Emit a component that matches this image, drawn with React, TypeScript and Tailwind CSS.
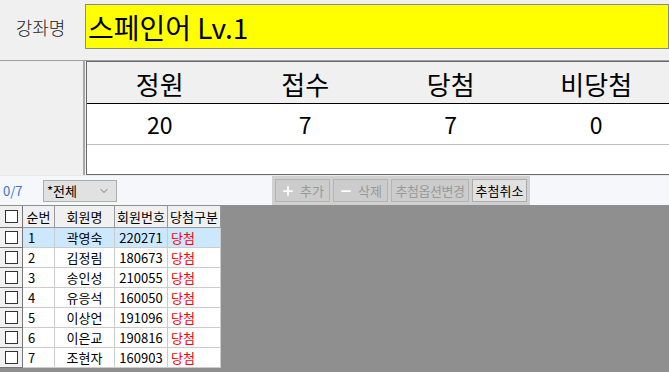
import { Plus, Minus, ChevronDown } from 'lucide-react';

const rows = [
    { no: 1, name: '곽영숙', id: '220271' },
    { no: 2, name: '김정림', id: '180673' },
    { no: 3, name: '송인성', id: '210055' },
    { no: 4, name: '유응석', id: '160050' },
    { no: 5, name: '이상언', id: '191096' },
    { no: 6, name: '이은교', id: '190816' },
    { no: 7, name: '조현자', id: '160903' },
];

const stats = [
    { label: '정원', value: '20' },
    { label: '접수', value: '7' },
    { label: '당첨', value: '7' },
    { label: '비당첨', value: '0' },
];

function Check() {
    return <div className="w-[13px] h-[13px] bg-white border border-[#333]" />;
}

export default function App() {
    return (
        <div
            className="w-[669px] h-[372px] overflow-hidden bg-[#f0f0f0] flex flex-col text-black"
            style={{ fontFamily: '"Noto Sans CJK KR", "Noto Sans", sans-serif' }}
        >
            {/* 강좌명 */}
            <div className="h-[61px] flex border-b border-[#a0a0a0] shrink-0">
                <div className="w-[85px] flex items-center justify-center text-[18px] font-light text-[#222] pb-[6px] pr-[4px]">강좌명</div>
                <div className="flex-1 pt-[4px]">
                    <div className="h-[45px] bg-[#ffff00] border border-[#8a8a8a] flex items-center pl-[2px] text-[28px] leading-none">
                        스페인어 Lv.1
                    </div>
                </div>
            </div>

            {/* 통계 */}
            <div className="h-[114px] flex shrink-0">
                <div className="w-[85px] border-r-2 border-[#a8a8a8]" />
                <div className="flex-1 ml-[1px] border border-[#6a6a6a] border-r-0 bg-white flex flex-col">
                    <div className="h-[42px] bg-[#f0f0f0] border-b border-black grid grid-cols-4">
                        {stats.map((s) => (
                            <div key={s.label} className="flex items-center justify-center text-[26px] leading-none pt-[2px]">{s.label}</div>
                        ))}
                    </div>
                    <div className="h-[41px] border-b border-[#c0c0c0] grid grid-cols-4">
                        {stats.map((s) => (
                            <div key={s.label} className="flex items-center justify-center text-[23px] leading-none">{s.value}</div>
                        ))}
                    </div>
                    <div className="flex-1" />
                </div>
            </div>

            {/* 툴바 */}
            <div className="h-[30px] flex bg-[#f5f7fb] shrink-0 border-t border-[#e8e8e8]">
                <div className="w-[43px] flex items-center pl-[3px] text-[13px] text-[#3a78c8]">0/7</div>
                <div className="mt-[4px] w-[74px] h-[22px] bg-[#e1e1e1] border border-[#adadad] flex items-center justify-between pl-[3px] pr-[6px] text-[13px]">
                    <span>*전체</span>
                    <ChevronDown size={12} strokeWidth={1.5} className="text-[#555]" />
                </div>
                <div className="w-[155px]" />
                <div className="flex items-center gap-[3px] bg-[#d0d0d0] px-[3px] text-[13px]">
                    <div className="h-[23px] w-[55px] bg-[#cccccc] border border-[#b4b4b4] flex items-center justify-center gap-[5px] text-[#9a9a9a]">
                        <Plus size={14} strokeWidth={3} className="text-white" />
                        추가
                    </div>
                    <div className="h-[23px] w-[55px] bg-[#cccccc] border border-[#b4b4b4] flex items-center justify-center gap-[5px] text-[#9a9a9a]">
                        <Minus size={14} strokeWidth={3} className="text-white" />
                        삭제
                    </div>
                    <div className="h-[23px] w-[78px] bg-[#cccccc] border border-[#b4b4b4] flex items-center justify-center text-[#9a9a9a] tracking-[-0.5px]">
                        추첨옵션변경
                    </div>
                    <div className="h-[23px] w-[55px] bg-[#e1e1e1] border border-[#adadad] flex items-center justify-center">
                        추첨취소
                    </div>
                </div>
                <div className="flex-1" />
            </div>

            {/* 목록 */}
            <div className="flex-1 bg-[#8f8f8f] flex">
                <div className="w-[221px] text-[13px] leading-none">
                    <div className="flex h-[23px] bg-[#f0f0f0] border-t border-[#8f8f8f]">
                        <div className="w-[23px] flex items-center justify-center border-r border-b border-[#777]"><Check /></div>
                        <div className="w-[32px] flex items-center justify-center border-r border-b border-[#999]">순번</div>
                        <div className="w-[60px] flex items-center justify-center border-r border-b border-[#999]">회원명</div>
                        <div className="w-[53px] flex items-center justify-center border-r border-b border-[#999]">회원번호</div>
                        <div className="w-[53px] flex items-center justify-center border-r border-b border-[#999]">당첨구분</div>
                    </div>
                    {rows.map((r, i) => (
                        <div key={r.no} className={`flex h-[20px] ${i === 0 ? 'bg-[#cce8ff]' : 'bg-white'}`}>
                            <div className="w-[23px] bg-[#f0f0f0] flex items-center justify-center border-r border-b border-[#777]"><Check /></div>
                            <div className="w-[32px] flex items-center pl-[5px] border-r border-b border-[#ccc]">{r.no}</div>
                            <div className="w-[60px] flex items-center justify-center border-r border-b border-[#ccc]">{r.name}</div>
                            <div className="w-[53px] flex items-center justify-center border-r border-b border-[#ccc]">{r.id}</div>
                            <div className="w-[53px] flex items-center pl-[3px] text-[#ff0000] border-r border-b border-[#ccc]">당첨</div>
                        </div>
                    ))}
                </div>
            </div>
        </div>
    );
}
